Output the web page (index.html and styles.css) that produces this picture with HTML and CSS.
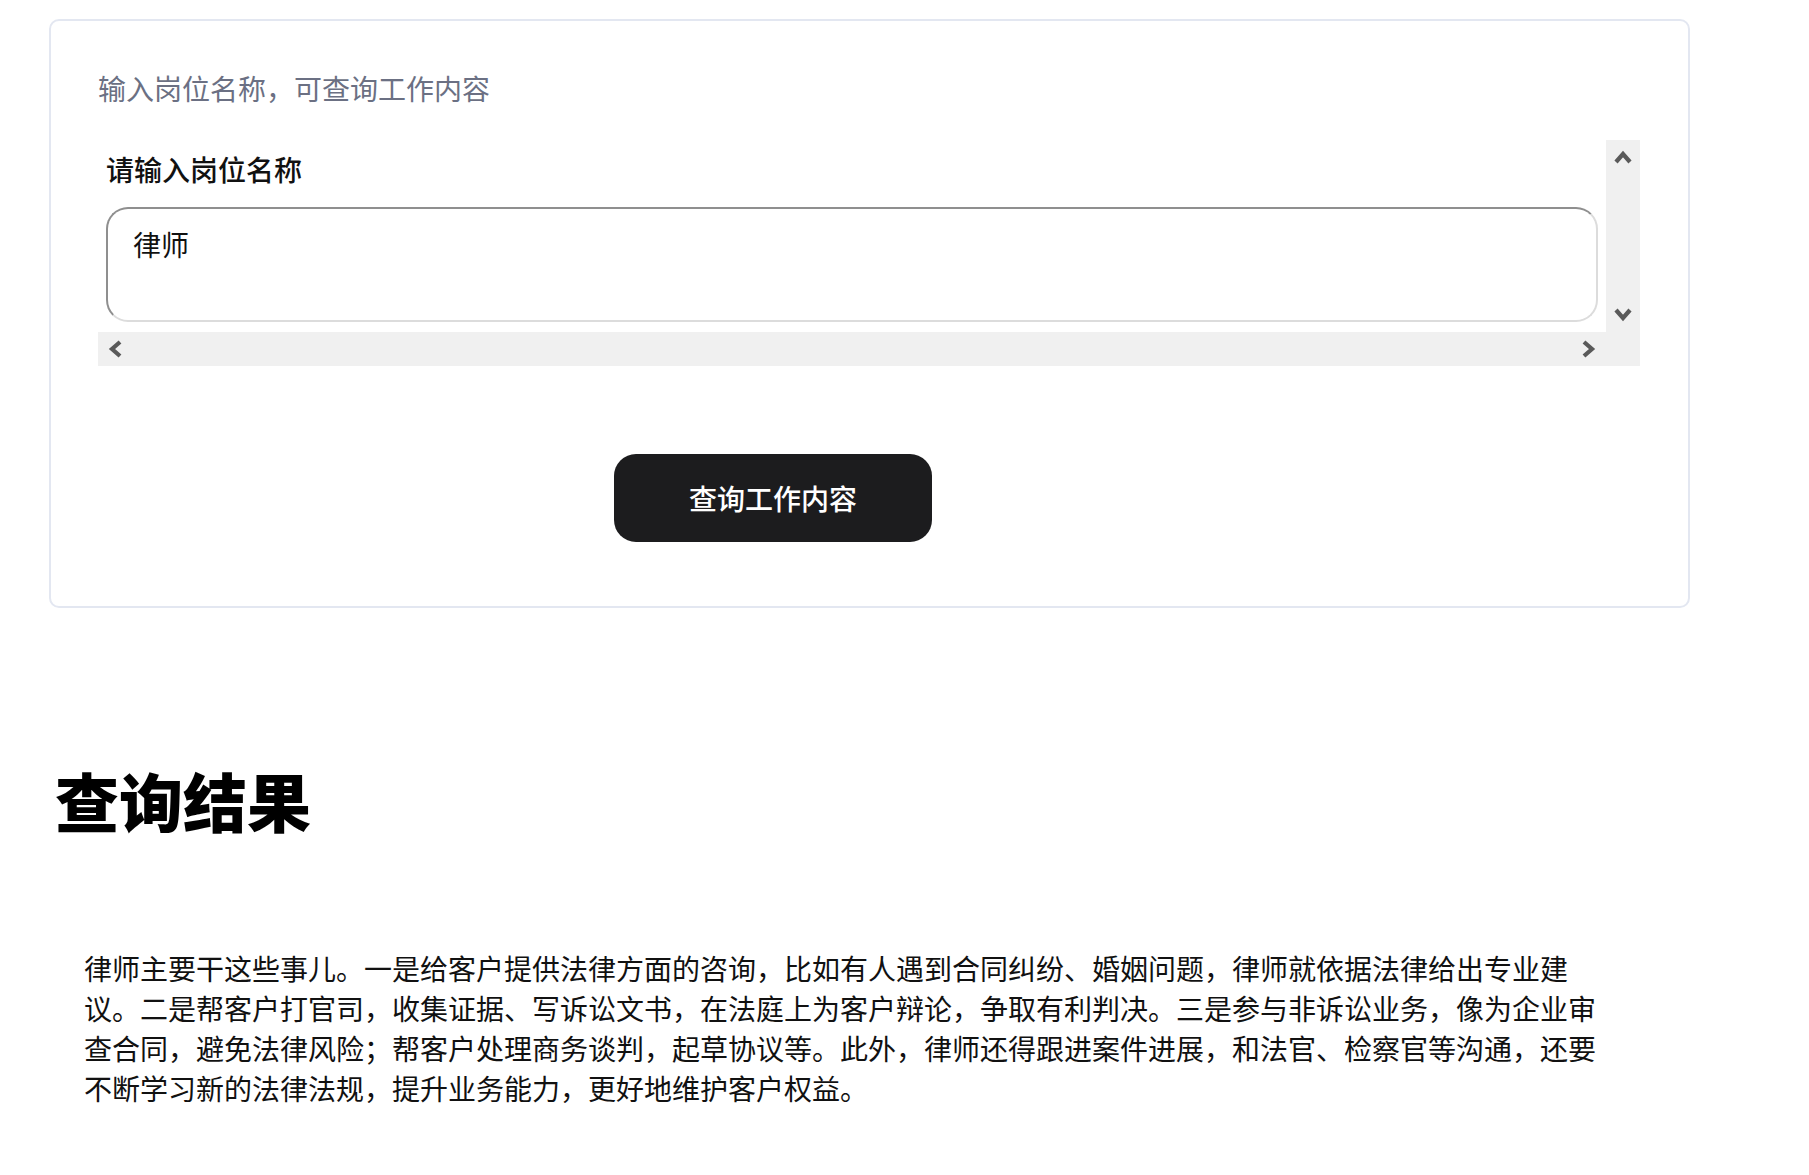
FILE: index.html
```html
<!DOCTYPE html>
<html lang="zh-CN">
<head>
<meta charset="utf-8">
<title>岗位工作内容查询</title>
<link rel="stylesheet" href="styles.css">
</head>
<body>
<main class="page">
  <section class="card">
    <p class="hint">输入岗位名称，可查询工作内容</p>
    <div class="scrollbox">
      <div class="scroll-content">
        <label class="field-label" for="job">请输入岗位名称</label>
        <textarea id="job" class="field-input">律师</textarea>
      </div>
      <div class="vbar">
        <span class="arrow">
          <svg width="18" height="14" viewBox="0 0 18 14"><path d="M2 12 L9 4 L16 12" fill="none" stroke="#5a5a5a" stroke-width="4.2"/></svg>
        </span>
        <span class="arrow">
          <svg width="18" height="14" viewBox="0 0 18 14"><path d="M2 2 L9 10 L16 2" fill="none" stroke="#5a5a5a" stroke-width="4.2"/></svg>
        </span>
      </div>
      <div class="hbar">
        <span class="arrow">
          <svg width="14" height="18" viewBox="0 0 14 18"><path d="M12 2 L4 9 L12 16" fill="none" stroke="#5a5a5a" stroke-width="4.2"/></svg>
        </span>
        <span class="arrow">
          <svg width="14" height="18" viewBox="0 0 14 18"><path d="M2 2 L10 9 L2 16" fill="none" stroke="#5a5a5a" stroke-width="4.2"/></svg>
        </span>
      </div>
      <div class="corner"></div>
    </div>
    <div class="actions">
      <button class="submit" type="button">查询工作内容</button>
    </div>
  </section>

  <h1 class="result-title">查询结果</h1>
  <p class="result-text">律师主要干这些事儿。一是给客户提供法律方面的咨询，比如有人遇到合同纠纷、婚姻问题，律师就依据法律给出专业建议。二是帮客户打官司，收集证据、写诉讼文书，在法庭上为客户辩论，争取有利判决。三是参与非诉讼业务，像为企业审查合同，避免法律风险；帮客户处理商务谈判，起草协议等。此外，律师还得跟进案件进展，和法官、检察官等沟通，还要不断学习新的法律法规，提升业务能力，更好地维护客户权益。</p>
</main>
</body>
</html>
```

FILE: styles.css
```css
* {
  box-sizing: border-box;
}

html, body {
  margin: 0;
  padding: 0;
  background: #ffffff;
}

body {
  font-family: "Noto Sans CJK SC", "Noto Sans", sans-serif;
  color: #111111;
}

.page {
  padding: 19px 0 40px 0;
}

.card {
  margin: 0 0 0 49px;
  width: 1641px;
  border: 2px solid #e3e7f1;
  border-radius: 10px;
  padding: 47px 48px 64px 47px;
  background: #ffffff;
}

.hint {
  margin: 0;
  font-size: 28px;
  line-height: 40px;
  color: #6b7083;
}

.scrollbox {
  margin-top: 32px;
  display: grid;
  grid-template-columns: 1508px 34px;
  grid-template-rows: 192px 34px;
  width: 1542px;
}

.scroll-content {
  background: #ffffff;
  padding: 9px 8px 10px 8px;
  display: flex;
  flex-direction: column;
}

.field-label {
  font-size: 28px;
  line-height: 40px;
  font-weight: 500;
  color: #111111;
  margin-bottom: 18px;
}

.field-input {
  display: block;
  width: 1492px;
  height: 115px;
  margin: 0;
  padding: 15px 25px;
  font-family: "Noto Sans CJK SC", "Noto Sans", sans-serif;
  font-size: 28px;
  line-height: 40px;
  color: #111111;
  border-width: 2px;
  border-style: solid;
  border-color: #8f8f8f #dcdcdc #dcdcdc #8f8f8f;
  border-radius: 22px;
  resize: none;
  outline: none;
  background: #ffffff;
}

.vbar {
  background: #f0f0f0;
  display: flex;
  flex-direction: column;
  justify-content: space-between;
}

.hbar {
  background: #f0f0f0;
  display: flex;
  justify-content: space-between;
}

.corner {
  background: #f0f0f0;
}

.arrow {
  width: 34px;
  height: 34px;
  display: flex;
  align-items: center;
  justify-content: center;
}

.actions {
  margin-top: 88px;
  padding-left: 516px;
}

.submit {
  width: 318px;
  height: 88px;
  border: none;
  border-radius: 22px;
  background: #1c1c1e;
  color: #ffffff;
  font-family: "Noto Sans CJK SC", "Noto Sans", sans-serif;
  font-size: 28px;
  font-weight: 500;
  line-height: 40px;
  cursor: pointer;
}

.result-title {
  margin: 153px 0 0 55px;
  font-size: 64px;
  line-height: 77px;
  font-weight: 900;
  color: #000000;
}

.result-text {
  margin: 110px 0 0 84px;
  width: 1528px;
  font-size: 28px;
  line-height: 40px;
  color: #111111;
}
```
